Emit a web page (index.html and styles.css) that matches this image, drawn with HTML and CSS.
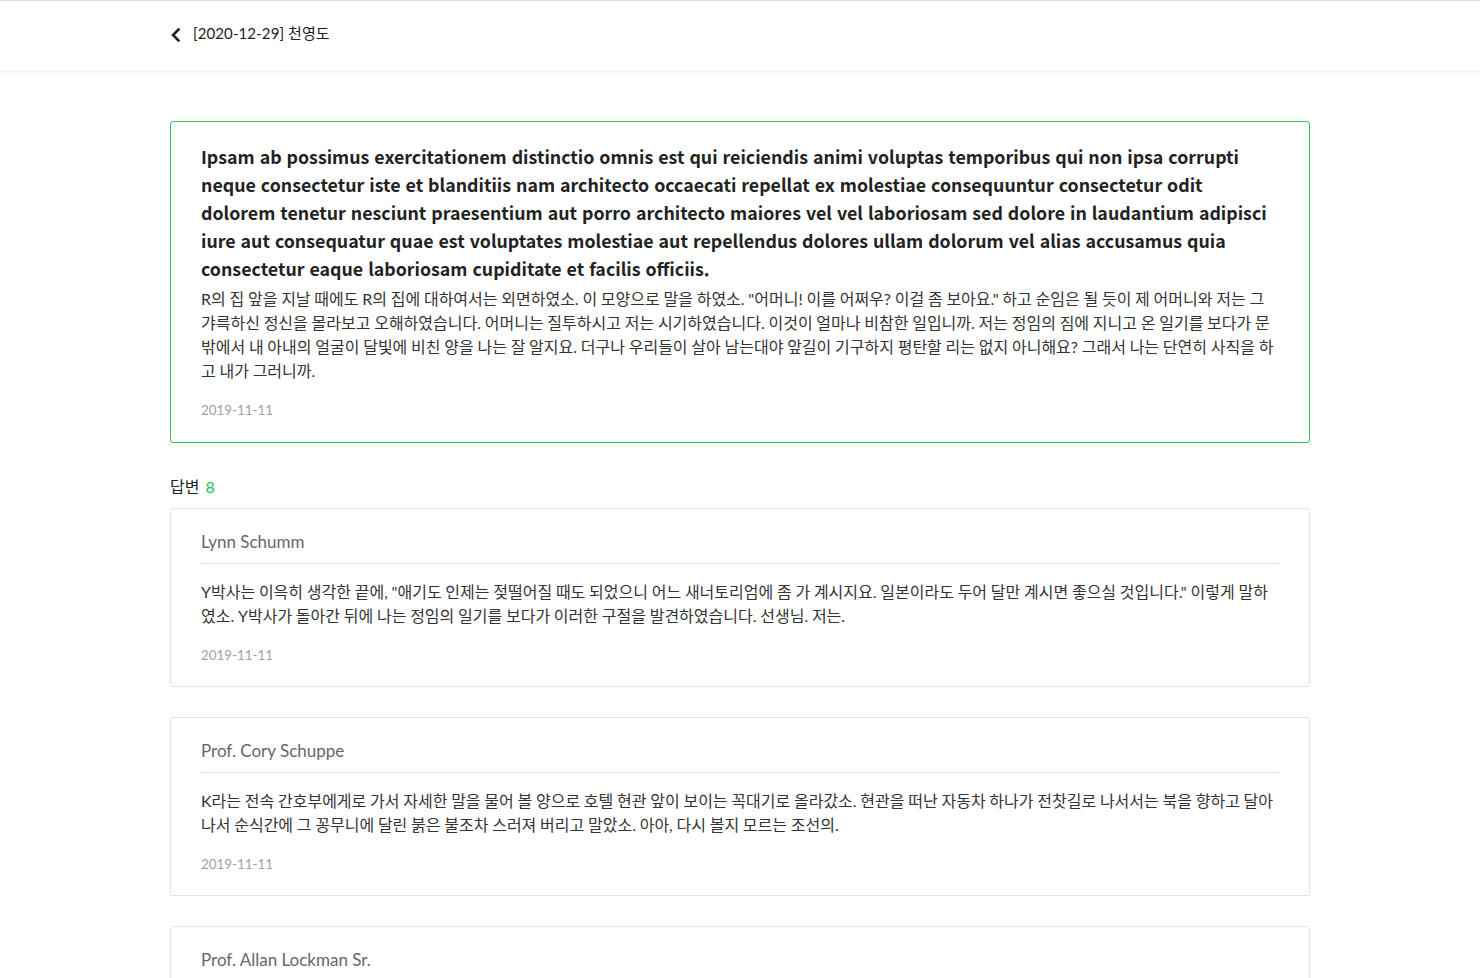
FILE: index.html
```html
<!DOCTYPE html>
<html lang="ko">
<head>
<meta charset="utf-8">
<title>[2020-12-29] 천영도</title>
<link rel="stylesheet" href="styles.css">
</head>
<body>
<header class="topbar">
  <div class="topbar-inner">
    <a class="back" href="#" aria-label="뒤로">
      <svg width="12" height="14" viewBox="0 0 12 14"><path d="M8.5 1.5 L3 7 L8.5 12.5" fill="none" stroke="#222" stroke-width="2.6" stroke-linecap="square"/></svg>
    </a>
    <span class="topbar-title">[2020-12-29] 천영도</span>
  </div>
</header>

<main class="container">
  <section class="question">
    <h1 class="q-title">Ipsam ab possimus exercitationem distinctio omnis est qui reiciendis animi voluptas temporibus qui non ipsa corrupti neque consectetur iste et blanditiis nam architecto occaecati repellat ex molestiae consequuntur consectetur odit dolorem tenetur nesciunt praesentium aut porro architecto maiores vel vel laboriosam sed dolore in laudantium adipisci iure aut consequatur quae est voluptates molestiae aut repellendus dolores ullam dolorum vel alias accusamus quia consectetur eaque laboriosam cupiditate et facilis officiis.</h1>
    <p class="q-body">R의 집 앞을 지날 때에도 R의 집에 대하여서는 외면하였소. 이 모양으로 말을 하였소. "어머니! 이를 어쩌우? 이걸 좀 보아요." 하고 순임은 될 듯이 제 어머니와 저는 그 갸륵하신 정신을 몰라보고 오해하였습니다. 어머니는 질투하시고 저는 시기하였습니다. 이것이 얼마나 비참한 일입니까. 저는 정임의 짐에 지니고 온 일기를 보다가 문 밖에서 내 아내의 얼굴이 달빛에 비친 양을 나는 잘 알지요. 더구나 우리들이 살아 남는대야 앞길이 기구하지 평탄할 리는 없지 아니해요? 그래서 나는 단연히 사직을 하고 내가 그러니까.</p>
    <div class="date">2019-11-11</div>
  </section>

  <h2 class="answers-head">답변 <span class="count">8</span></h2>

  <article class="answer">
    <div class="a-name">Lynn Schumm</div>
    <p class="a-body">Y박사는 이윽히 생각한 끝에, "애기도 인제는 젖떨어질 때도 되었으니 어느 새너토리엄에 좀 가 계시지요. 일본이라도 두어 달만 계시면 좋으실 것입니다." 이렇게 말하였소. Y박사가 돌아간 뒤에 나는 정임의 일기를 보다가 이러한 구절을 발견하였습니다. 선생님. 저는.</p>
    <div class="date">2019-11-11</div>
  </article>

  <article class="answer">
    <div class="a-name">Prof. Cory Schuppe</div>
    <p class="a-body">K라는 전속 간호부에게로 가서 자세한 말을 물어 볼 양으로 호텔 현관 앞이 보이는 꼭대기로 올라갔소. 현관을 떠난 자동차 하나가 전찻길로 나서서는 북을 향하고 달아나서 순식간에 그 꽁무니에 달린 붉은 불조차 스러져 버리고 말았소. 아아, 다시 볼지 모르는 조선의.</p>
    <div class="date">2019-11-11</div>
  </article>

  <article class="answer">
    <div class="a-name">Prof. Allan Lockman Sr.</div>
  </article>
</main>
</body>
</html>
```

FILE: styles.css
```css
* { box-sizing: border-box; }

html, body {
  margin: 0;
  padding: 0;
  background: #fff;
}

body {
  font-family: Lato, "Noto Sans CJK KR", "Noto Sans", sans-serif;
  color: #333;
}

.topbar {
  height: 72px;
  border-top: 1px solid #dcdcdc;
  background: #fff;
  box-shadow: 0 2px 4px rgba(0, 0, 0, 0.04);
  border-bottom: 1px solid #f3f3f3;
}

.topbar-inner {
  width: 1140px;
  margin: 0 auto;
  height: 100%;
  display: flex;
  align-items: center;
  padding-bottom: 7px;
}

.back {
  display: flex;
  align-items: center;
  width: 23px;
  padding-top: 5px;
}

.topbar-title {
  font-size: 15px;
  color: #222;
  letter-spacing: 0.1px;
}

.container {
  width: 1140px;
  margin: 49px auto 0;
}

.question {
  border: 1px solid #35c25a;
  border-radius: 3px;
  padding: 20px 30px 22px;
}

.q-title {
  margin: 0;
  font-family: "Noto Sans CJK KR", "Noto Sans", sans-serif;
  font-weight: 700;
  font-size: 17.8px;
  line-height: 28px;
  color: #222;
}

.q-body {
  margin: 5px 0 0;
  font-size: 16px;
  line-height: 24px;
  word-spacing: -0.35px;
  color: #333;
}

.date {
  margin-top: 17px;
  font-size: 13.4px;
  line-height: 20px;
  color: #9ea2a7;
}

.answers-head {
  margin: 33px 0 10px;
  font-size: 16px;
  font-weight: 400;
  line-height: 22px;
  color: #222;
}

.count {
  color: #19c34f;
  margin-left: 2px;
}

.answer {
  border: 1px solid #e1e3e6;
  border-radius: 3px;
  padding: 21px 30px 21px;
  margin-bottom: 30px;
}

.a-name {
  font-size: 17px;
  line-height: 24px;
  color: #666;
  padding-bottom: 9px;
  border-bottom: 1px solid #e3e3e3;
}

.a-body {
  margin: 16px 0 0;
  font-size: 16px;
  line-height: 24px;
  word-spacing: -0.35px;
  color: #333;
}
```
